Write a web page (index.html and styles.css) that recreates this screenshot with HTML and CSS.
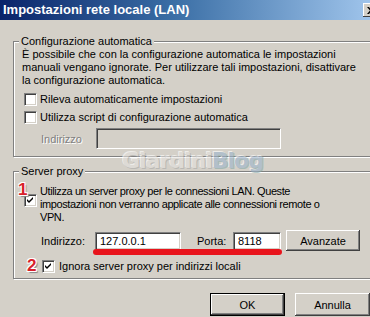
FILE: index.html
```html
<!DOCTYPE html>
<html>
<head>
<meta charset="utf-8">
<link rel="stylesheet" href="styles.css">
</head>
<body>
<div class="dialog">
  <div class="titlebar">
    <span class="title">Impostazioni rete locale (LAN)</span>
    <span class="close"><svg width="8" height="7" viewBox="0 0 8 7"><path d="M0 0 H2 L4 2.5 L6 0 H8 L5 3.5 L8 7 H6 L4 4.5 L2 7 H0 L3 3.5 Z" fill="#000"/></svg></span>
  </div>
  <div class="content">
    <fieldset class="group group-auto">
      <legend>Configurazione automatica</legend>
      <p class="desc">È possibile che con la configurazione automatica le impostazioni<br>manuali vengano ignorate. Per utilizzare tali impostazioni, disattivare<br>la configurazione automatica.</p>
      <label class="check-row"><span class="cb"></span><span>Rileva automaticamente impostazioni</span></label>
      <label class="check-row"><span class="cb"></span><span>Utilizza script di configurazione automatica</span></label>
      <div class="addr-row">
        <span class="disabled-label">Indirizzo</span>
        <span class="field field-disabled"></span>
      </div>
    </fieldset>

    <fieldset class="group group-proxy">
      <legend>Server proxy</legend>
      <div class="check-row multi">
        <span class="cb checked">
          <svg width="7" height="7" viewBox="0 0 7 7"><path d="M0 2 L2 4 L6 0 L6 2 L2 6 L0 4 Z" fill="#000"/></svg>
        </span>
        <span class="proxy-text">Utilizza un server proxy per le connessioni LAN. Queste<br>impostazioni non verranno applicate alle connessioni remote o<br>VPN.</span>
        <span class="badge badge-1">1</span>
      </div>
      <div class="proxy-row">
        <span class="lbl-ind">Indirizzo:</span>
        <span class="field field-addr">127.0.0.1</span>
        <span class="lbl-port">Porta:</span>
        <span class="field field-port">8118</span>
        <button class="btn btn-adv">Avanzate</button>
        <span class="redline"></span>
      </div>
      <div class="check-row bypass">
        <span class="badge badge-2">2</span>
        <span class="cb checked">
          <svg width="7" height="7" viewBox="0 0 7 7"><path d="M0 2 L2 4 L6 0 L6 2 L2 6 L0 4 Z" fill="#000"/></svg>
        </span>
        <span>Ignora server proxy per indirizzi locali</span>
      </div>
    </fieldset>

    <div class="buttons">
      <button class="btn btn-ok">OK</button>
      <button class="btn btn-cancel">Annulla</button>
    </div>

    <div class="watermark"><span class="wm-a">Giardini</span><span class="wm-b">Blog</span></div>
  </div>
</div>
</body>
</html>
```
FILE: styles.css
```css
html, body {
  margin: 0;
  padding: 0;
}
body {
  width: 370px;
  height: 317px;
  overflow: hidden;
  background: #d4d0c8;
  font-family: "Liberation Sans", Arial, sans-serif;
  font-size: 11px;
  color: #000;
}
.dialog {
  width: 384px;
  position: relative;
}
.titlebar {
  height: 20px;
  display: flex;
  align-items: center;
  justify-content: space-between;
  padding-left: 3px;
  background: linear-gradient(to right, #0a246a 0%, #3a6ea5 45%, #a6caf0 100%);
}
.title {
  color: #fff;
  font-weight: bold;
  font-size: 13px;
  line-height: 20px;
}
.close {
  width: 16px;
  height: 14px;
  margin-right: 5px;
  background: #d4d0c8;
  box-shadow: inset -1px -1px #404040, inset 1px 1px #fff;
  display: flex;
  align-items: center;
  justify-content: center;
}
.content {
  padding: 15px 0 0 13px;
  position: relative;
}
.group {
  margin: 0;
  padding: 0;
  border: 1px solid #808080;
  box-shadow: inset 1px 1px #fff, 1px 1px #fff;
  width: 360px;
  box-sizing: border-box;
  min-width: 0;
}
.group legend {
  margin-left: 5px;
  padding: 0 2px;
  line-height: 13px;
  background: #d4d0c8;
}
.desc {
  margin: 0;
  padding-left: 8px;
  line-height: 13px;
  white-space: nowrap;
}
.check-row {
  display: flex;
  align-items: center;
  height: 18px;
  padding-left: 10px;
  gap: 3px;
  white-space: nowrap;
  position: relative;
}
.group-auto .check-row:first-of-type {
  margin-top: 3px;
}
.cb {
  width: 13px;
  height: 13px;
  box-sizing: border-box;
  background: #fff;
  border-top: 1px solid #808080;
  border-left: 1px solid #808080;
  border-right: 1px solid #fff;
  border-bottom: 1px solid #fff;
  box-shadow: inset 1px 1px #404040, inset -1px -1px #d4d0c8;
  display: flex;
  align-items: center;
  justify-content: center;
  flex: none;
}
.addr-row {
  display: flex;
  align-items: center;
  margin-top: 2px;
  padding-left: 27px;
  height: 21px;
  margin-bottom: 7px;
}
.disabled-label {
  color: #808080;
  text-shadow: 1px 1px #fff;
  width: 55px;
}
.field {
  box-sizing: border-box;
  background: #fff;
  border-top: 1px solid #808080;
  border-left: 1px solid #808080;
  border-right: 1px solid #fff;
  border-bottom: 1px solid #fff;
  box-shadow: inset 1px 1px #404040, inset -1px -1px #d4d0c8;
  display: flex;
  align-items: center;
  padding-left: 4px;
  flex: none;
}
.field-disabled {
  background: #d4d0c8;
  width: 185px;
  height: 21px;
}
.group-proxy {
  margin-top: 8px;
}
.check-row.multi {
  margin-top: 7px;
  height: auto;
  align-items: flex-start;
  line-height: 13px;
}
.check-row.multi .cb {
  margin-top: 9px;
}
.proxy-text {
  letter-spacing: -0.4px;
}
.proxy-row {
  display: flex;
  align-items: center;
  height: 21px;
  margin-top: 6px;
  padding-left: 27px;
  position: relative;
}
.lbl-ind {
  width: 54px;
}
.field-addr {
  width: 86px;
  height: 18px;
}
.lbl-port {
  margin-left: 16px;
  width: 36px;
}
.field-port {
  width: 48px;
  height: 18px;
}
.btn {
  font-family: "Liberation Sans", Arial, sans-serif;
  font-size: 11px;
  color: #000;
  background: #d4d0c8;
  border: none;
  padding: 0;
  box-sizing: border-box;
  box-shadow: inset -1px -1px #404040, inset 1px 1px #fff, inset -2px -2px #808080;
}
.btn-adv {
  width: 74px;
  height: 21px;
  margin-left: 5px;
}
.redline {
  position: absolute;
  left: 79px;
  top: 19px;
  width: 189px;
  height: 6px;
  border-radius: 3px;
  background: #e8141c;
}
.check-row.bypass {
  margin-top: 6px;
  padding-left: 28px;
  gap: 4px;
  margin-bottom: 3px;
}
.badge {
  position: absolute;
  font-weight: bold;
  font-size: 17px;
  line-height: 17px;
  color: #d8202a;
  text-shadow: -1px -1px 0 #fff, 1px -1px 0 #fff, -1px 1px 0 #fff, 1px 1px 0 #fff, 2px 2px 1px #888;
}
.badge-1 {
  left: 4px;
  top: -4px;
}
.badge-2 {
  left: 13px;
  top: 0px;
}
.buttons {
  display: flex;
  justify-content: flex-end;
  gap: 10px;
  margin-top: 14px;
  width: 357px;
}
.btn-ok, .btn-cancel {
  width: 75px;
  height: 23px;
}
.btn-ok {
  box-shadow: inset 0 0 0 1px #000, inset -2px -2px #404040, inset 2px 2px #fff, inset -3px -3px #808080;
}
.watermark {
  position: absolute;
  left: 122px;
  top: 128px;
  font-family: "DejaVu Sans", sans-serif;
  font-weight: bold;
  font-size: 22px;
  letter-spacing: -1px;
  opacity: 0.6;
}
.wm-a {
  color: #e4e2de;
  text-shadow: 1px 1px 0 #aaa, -1px -1px 0 #fff;
}
.wm-b {
  color: #9db5cc;
  text-shadow: 1px 1px 0 #8aa, -1px -1px 0 #fff;
}
```
